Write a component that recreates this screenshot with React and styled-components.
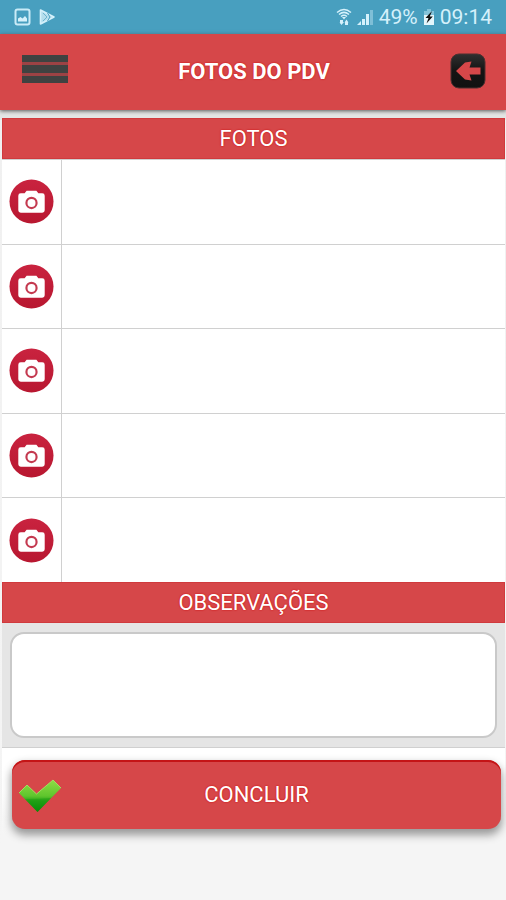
import styled, { createGlobalStyle } from "styled-components";

const photos = [1, 2, 3, 4, 5];

function StatusBar() {
    return (
        <StatusStyle>
            <StatusGroup>
                <svg width="17" height="18" viewBox="0 0 17 18">
                    <rect x="1.5" y="1.5" width="14" height="15" rx="2" fill="none" stroke="#c9ebf7" strokeWidth="2" />
                    <path d="M4 13.5V10.5L6.5 9L8.5 10.5L11 8L13 10.5V13.5Z" fill="#d5f1fb" />
                </svg>
                <svg width="17" height="18" viewBox="0 0 17 18">
                    <path d="M1.5 2L15 9L1.5 16Z" fill="#b5deed" stroke="#d5f1fb" strokeWidth="1.6" strokeLinejoin="round" />
                    <path d="M4 5L8 9L4 13" fill="none" stroke="#6fb5cf" strokeWidth="1" />
                    <path d="M8.5 5L11 9L8.5 13" fill="none" stroke="#489fbf" strokeWidth="1" />
                </svg>
            </StatusGroup>
            <StatusInfo>
                <svg width="16" height="18" viewBox="0 0 16 18">
                    <g fill="none" stroke="#d5f1fb" strokeWidth="1.5">
                        <path d="M1 4.5Q8 -1.5 15 4.5" />
                        <path d="M3 6.5Q8 2.2 13 6.5" />
                        <path d="M5 8.5Q8 6 11 8.5" />
                    </g>
                    <path d="M6 9H10L8 11.5Z" fill="#d5f1fb" />
                    <path d="M4 12H7V14H8L5.5 17L3.5 14.5H4ZM9 17V14.5H8.5L10.5 11.5L12.5 14.5H12V17Z" fill="#d5f1fb" />
                </svg>
                <svg width="17" height="18" viewBox="0 0 17 18">
                    <path d="M0 17L4 13V17ZM5 11H8V17H5ZM9 6H12V17H9Z" fill="#d5f1fb" />
                    <path d="M13 2H16V17H13Z" fill="#7fbfd7" />
                </svg>
                <span>49%</span>
                <svg width="12" height="18" viewBox="0 0 12 18">
                    <path d="M4 1H8V3H11V17H1V3H4Z" fill="#e4f6fc" />
                    <path d="M1 3H4V1H8V3H11V7H1Z" fill="#83c3da" />
                    <path d="M9 3L2.5 10H5.5L3.5 15.5L9.8 8.5H6.8Z" fill="#111" />
                </svg>
                <span>09:14</span>
            </StatusInfo>
        </StatusStyle>
    );
}

function CameraIcon() {
    return (
        <svg width="45" height="45" viewBox="0 0 46 46" aria-hidden="true">
            <defs>
                <linearGradient id="camera" x1="0" y1="0" x2="0" y2="1">
                    <stop offset="0" stopColor="#c9233f" />
                    <stop offset="1" stopColor="#b81730" />
                </linearGradient>
            </defs>
            <circle cx="23" cy="23" r="22.5" fill="url(#camera)" />
            <path
                d="M12 14.5H16L18 12H28L30 14.5H34Q36.5 14.5 36.5 17V32Q36.5 34.5 34 34.5H12Q9.5 34.5 9.5 32V17Q9.5 14.5 12 14.5Z"
                fill="#fff"
            />
            <circle cx="23" cy="24.5" r="5.2" fill="#fff" stroke="#c43a50" strokeWidth="2.2" />
        </svg>
    );
}

function CheckIcon() {
    return (
        <svg width="44" height="36" viewBox="0 0 44 36" aria-hidden="true">
            <defs>
                <linearGradient id="check" x1="0" y1="0" x2="0" y2="1">
                    <stop offset="0" stopColor="#8fdc45" />
                    <stop offset="0.5" stopColor="#5fc52d" />
                    <stop offset="0.65" stopColor="#2ba61a" />
                    <stop offset="1" stopColor="#078a06" />
                </linearGradient>
            </defs>
            <path d="M1 16L9 8L18.5 17L35 3L43 11L19.5 35Z" fill="url(#check)" />
            <path d="M7 22Q20 22 33 21L19.5 35Z" fill="#0b920a" opacity="0.3" />
            <path d="M1 16L9 8L18.5 17L35 3L43 11" fill="none" stroke="#a0df62" strokeWidth="1" />
        </svg>
    );
}

function App() {
    return (
        <>
            <GlobalStyle />
            <StatusBar />
            <Header>
                <IconButton type="button" aria-label="Menu">
                    <svg width="46" height="32" viewBox="0 0 46 32">
                        <path d="M0 0H46V28H0Z" fill="#9c4244" />
                        <path d="M0 0H46V7H0ZM0 10H46V18H0ZM0 21H46V28H0Z" fill="#3f4241" />
                    </svg>
                </IconButton>
                <h1>FOTOS DO PDV</h1>
                <IconButton type="button" aria-label="Voltar">
                    <svg width="36" height="36" viewBox="0 0 36 36">
                        <defs>
                            <linearGradient id="back" x1="0" y1="0" x2="0" y2="1">
                                <stop offset="0" stopColor="#303030" />
                                <stop offset="0.5" stopColor="#141414" />
                                <stop offset="1" stopColor="#111" />
                            </linearGradient>
                        </defs>
                        <rect x="1" y="1" width="34" height="34" rx="8" fill="url(#back)" stroke="#4a3030" />
                        <path d="M6 18L15 9.5L21.5 8.5L19.5 14.5H30.5V21.5H19.5L21.5 27.5L15 26.5Z" fill="#d64749" />
                    </svg>
                </IconButton>
            </Header>
            <Main>
                <SectionTitle>FOTOS</SectionTitle>
                <PhotoTable>
                    <tbody>
                        {photos.map((photo) => (
                            <tr key={photo}>
                                <CameraCell>
                                    <IconButton type="button" aria-label={`Foto ${photo}`}>
                                        <CameraIcon />
                                    </IconButton>
                                </CameraCell>
                                <PhotoCell />
                            </tr>
                        ))}
                    </tbody>
                </PhotoTable>
                <SectionTitle as="label" htmlFor="notes">
                    OBSERVAÇÕES
                </SectionTitle>
                <NotesBox>
                    <Notes id="notes" />
                </NotesBox>
                <Footer>
                    <SubmitButton type="button">
                        <CheckIcon />
                        <span>CONCLUIR</span>
                    </SubmitButton>
                </Footer>
            </Main>
        </>
    );
}

const GlobalStyle = createGlobalStyle`
    * {
        box-sizing: border-box;
    }

    body {
        min-height: 100vh;
        margin: 0;
        background: #f5f5f5;
        font-family: Roboto, "Liberation Sans", sans-serif;
    }

    svg {
        display: block;
        flex-shrink: 0;
    }
`;

const StatusStyle = styled.div`
    display: flex;
    align-items: center;
    justify-content: space-between;
    height: 34px;
    padding: 0 14px;
    background: #489fbf;
    color: #d5f1fb;
    font-size: 21px;
`;

const StatusGroup = styled.div`
    display: flex;
    align-items: center;
    gap: 8px;
`;

const StatusInfo = styled.div`
    display: flex;
    align-items: center;
    gap: 5px;
`;

const Header = styled.header`
    position: relative;
    display: grid;
    grid-template-columns: 1fr auto 1fr;
    align-items: center;
    height: 76px;
    padding: 0 20px 2px 22px;
    background: #d64749;
    box-shadow: 0 1px 4px #555;

    h1 {
        margin: 0;
        color: #fff;
        font-size: 22px;
        font-weight: 700;
        text-shadow: 0 0 2px #c00;
    }

    button:last-child {
        justify-self: end;
    }
`;

const IconButton = styled.button`
    justify-self: start;
    padding: 0;
    border: 0;
    background: none;
    cursor: pointer;
`;

const Main = styled.main`
    padding: 8px 1px 0 2px;
    background: linear-gradient(#e4e6e5 10px, #f0f0f0 10px, #f5f5f5);
`;

const SectionTitle = styled.h2`
    display: block;
    height: 41px;
    margin: 0;
    border: 1px solid #d03a3d;
    background: #d64749;
    color: #fff;
    font-size: 22px;
    font-weight: 400;
    line-height: 40px;
    text-align: center;
    text-shadow: 0 0 2px #c00;
`;

const PhotoTable = styled.table`
    width: 100%;
    height: 423px;
    border-spacing: 0;
    background: #fff;

    td {
        padding: 0;
        border-top: 1px solid #d0d0d0;
    }
`;

const CameraCell = styled.td`
    width: 60px;
    border-right: 1px solid #d0d0d0;

    button {
        display: block;
        margin: 0 auto;
    }
`;

const PhotoCell = styled.td`
    background: #fff;
`;

const NotesBox = styled.div`
    padding: 9px 8px;
    border-bottom: 1px solid #d0d0d0;
    background: #e5e5e5;
`;

const Notes = styled.textarea`
    display: block;
    width: 100%;
    height: 106px;
    padding: 10px;
    border: 2px solid #c9c9c9;
    border-radius: 14px;
    background: #fff;
    font: inherit;
    resize: none;
`;

const Footer = styled.div`
    padding: 12px 4px 20px 10px;
    background: linear-gradient(#fff 40%, #f5f5f5 85%);
`;

const SubmitButton = styled.button`
    display: flex;
    align-items: center;
    width: 100%;
    height: 69px;
    padding: 0 50px 0 6px;
    border: 0;
    border-radius: 13px;
    background: #d64749;
    box-shadow: 0 5px 9px 1px #999, inset 0 2px #c41416;
    color: #fff;
    font-family: inherit;
    font-size: 22px;
    text-shadow: 0 0 2px #c00;
    cursor: pointer;

    span {
        flex: 1;
    }
`;

export default App;
